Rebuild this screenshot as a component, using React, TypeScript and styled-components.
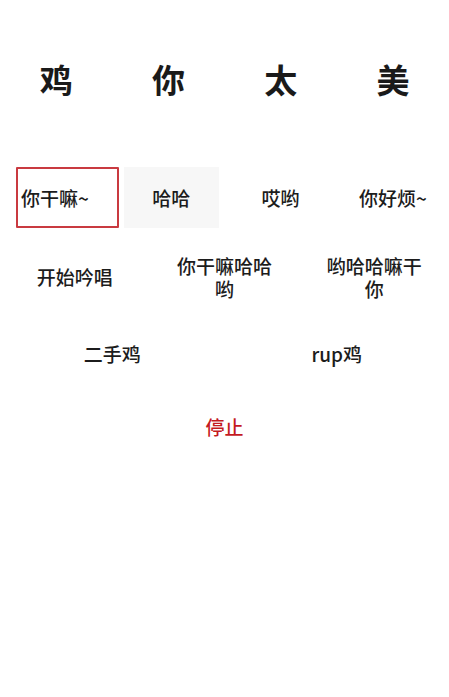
import styled, { createGlobalStyle, css } from "styled-components";

const Global = createGlobalStyle`
  html, body {
    margin: 0;
    padding: 0;
    background: #ffffff;
  }
  body {
    font-family: "Noto Sans CJK SC", "Noto Sans", sans-serif;
    color: #1c1c1c;
  }
`;

const Page = styled.div`
  width: 449px;
  min-height: 697px;
  display: flex;
  flex-direction: column;
`;

const TitleRow = styled.div`
  margin-top: 56px;
  height: 46px;
  display: grid;
  grid-template-columns: repeat(4, 1fr);
  align-items: center;
`;

const TitleChar = styled.span`
  text-align: center;
  font-size: 33px;
  font-weight: 600;
  line-height: 46px;
  color: #1a1a1a;
`;

const Row = styled.div<{ $cols: number; $top: number }>`
  margin-top: ${(p) => p.$top}px;
  display: grid;
  grid-template-columns: repeat(${(p) => p.$cols}, 1fr);
  align-items: center;
`;

const Cell = styled.div<{ $start?: boolean }>`
  height: 61px;
  display: flex;
  align-items: center;
  justify-content: ${(p) => (p.$start ? "flex-start" : "center")};
  padding-left: ${(p) => (p.$start ? "16px" : "0")};
  min-width: 0;
`;

const focusTone = css`
  flex: none;
  width: 103px;
  text-align: left;
  padding: 0 0 0 3px;
  border: 2px solid #c93a40;
  border-radius: 1px;
`;

const pressedTone = css`
  flex: none;
  width: 95px;
  margin-left: 6px;
  background: #f7f7f7;
`;

const Btn = styled.button<{ $tone?: "focus" | "pressed" | "danger" }>`
  box-sizing: border-box;
  height: 61px;
  max-width: 104px;
  padding: 0 4px;
  border: 0;
  outline: none;
  background: transparent;
  font-family: "Noto Sans CJK SC", "Noto Sans", sans-serif;
  font-size: 19px;
  font-weight: 500;
  line-height: 23px;
  color: ${(p) => (p.$tone === "danger" ? "#c41a1f" : "#1c1c1c")};
  text-align: center;
  cursor: pointer;
  ${(p) => p.$tone === "focus" && focusTone}
  ${(p) => p.$tone === "pressed" && pressedTone}
`;

const row1 = ["你干嘛~", "哈哈", "哎哟", "你好烦~"];
const row2 = ["开始吟唱", "你干嘛哈哈哟", "哟哈哈嘛干你"];
const row3 = ["二手鸡", "rup鸡"];

export default function App() {
  return (
    <Page>
      <Global />
      <TitleRow>
        {["鸡", "你", "太", "美"].map((c) => (
          <TitleChar key={c}>{c}</TitleChar>
        ))}
      </TitleRow>

      <Row $cols={4} $top={65}>
        {row1.map((t, i) => (
          <Cell key={t} $start={i === 0}>
            <Btn $tone={i === 0 ? "focus" : i === 1 ? "pressed" : undefined}>{t}</Btn>
          </Cell>
        ))}
      </Row>

      <Row $cols={3} $top={18}>
        {row2.map((t) => (
          <Cell key={t}>
            <Btn>{t}</Btn>
          </Cell>
        ))}
      </Row>

      <Row $cols={2} $top={16}>
        {row3.map((t) => (
          <Cell key={t}>
            <Btn>{t}</Btn>
          </Cell>
        ))}
      </Row>

      <Row $cols={1} $top={12}>
        <Cell>
          <Btn $tone="danger">停止</Btn>
        </Cell>
      </Row>
    </Page>
  );
}
